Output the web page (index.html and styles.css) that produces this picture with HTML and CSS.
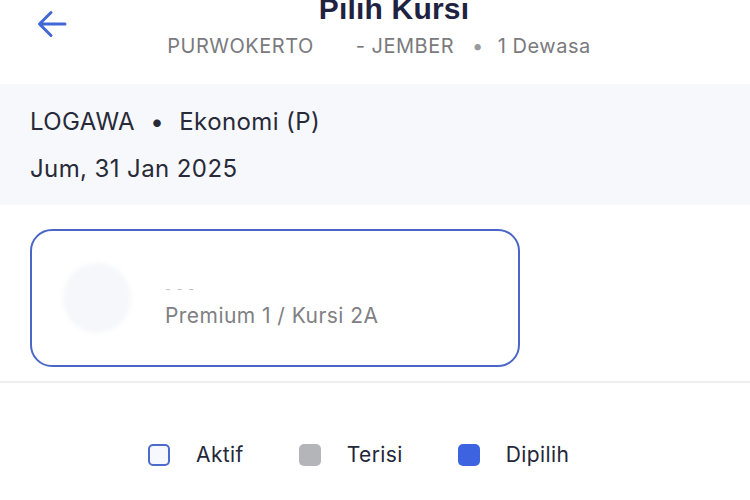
FILE: index.html
```html
<!DOCTYPE html>
<html lang="id">
<head>
<meta charset="utf-8">
<title>Pilih Kursi</title>
<link rel="stylesheet" href="styles.css">
</head>
<body>
<div class="page">
  <header class="header">
    <button class="back" aria-label="Kembali">
      <svg width="32" height="32" viewBox="0 0 32 32" fill="none" stroke="#4166d5" stroke-width="3" stroke-linecap="round" stroke-linejoin="round">
        <path d="M29 16H4M15 4.5L3.5 16L15 27.5"/>
      </svg>
    </button>
    <h1 class="title">Pilih Kursi</h1>
    <div class="route">
      <span class="origin">PURWOKERTO</span>
      <span class="dest">- JEMBER</span>
      <span class="dot">•</span>
      <span>1 Dewasa</span>
    </div>
  </header>

  <section class="trip">
    <div class="trip-line">LOGAWA <span class="sep">•</span> Ekonomi (P)</div>
    <div class="trip-line">Jum, 31 Jan 2025</div>
  </section>

  <section class="passengers">
    <div class="card">
      <div class="avatar"></div>
      <div class="card-info">
        <div class="name">- - -</div>
        <div class="seat">Premium 1 / Kursi 2A</div>
      </div>
    </div>
  </section>

  <footer class="legend">
    <div class="legend-item"><span class="box box-active"></span>Aktif</div>
    <div class="legend-item"><span class="box box-filled"></span>Terisi</div>
    <div class="legend-item"><span class="box box-selected"></span>Dipilih</div>
  </footer>
</div>
</body>
</html>
```

FILE: styles.css
```css
* { box-sizing: border-box; }
html, body { margin: 0; padding: 0; background: #ffffff; }
body {
  font-family: Inter, "Noto Sans", "Liberation Sans", sans-serif;
  color: #23263a;
  width: 750px;
  height: 500px;
  overflow: hidden;
}
.page { display: flex; flex-direction: column; }

.header {
  position: relative;
  height: 84px;
  display: flex;
  flex-direction: column;
  align-items: center;
}
.back {
  position: absolute;
  left: 36px;
  top: 8px;
  border: 0;
  background: none;
  padding: 0;
  width: 32px;
  height: 32px;
}
.title {
  margin: -8px 0 0 38px;
  font-family: "Liberation Sans", Arial, sans-serif;
  font-weight: 700;
  font-size: 30px;
  line-height: 34px;
  color: #1f2240;
  letter-spacing: 0.2px;
}
.route {
  margin-top: 8px;
  margin-left: 8px;
  display: flex;
  align-items: center;
  font-size: 20px;
  line-height: 24px;
  color: #7a7a7e;
  letter-spacing: 0.5px;
}
.origin { margin-right: 42px; }
.dot { margin: 0 14px 0 18px; color: #9a9a9e; }

.trip {
  background: #f7f8fc;
  height: 121px;
  padding: 23px 30px 0;
  display: flex;
  flex-direction: column;
  gap: 17px;
}
.trip-line {
  font-size: 24px;
  line-height: 30px;
  color: #272a38;
  letter-spacing: 0.4px;
}
.sep { margin: 0 8px; }

.passengers {
  padding: 24px 0 14px 30px;
  border-bottom: 2px solid #efeff1;
}
.card {
  width: 490px;
  height: 138px;
  border: 2px solid #4a67c8;
  border-radius: 22px;
  display: flex;
  align-items: center;
  padding-left: 31px;
}
.avatar {
  width: 68px;
  height: 70px;
  border-radius: 50%;
  background: #f6f7fb;
  filter: blur(2px);
}
.card-info {
  margin-left: 34px;
  margin-top: 14px;
  display: flex;
  flex-direction: column;
}
.name {
  font-size: 13px;
  line-height: 14px;
  color: #c4c4c8;
  letter-spacing: 1px;
  filter: blur(0.5px);
}
.seat {
  margin-top: 7px;
  font-size: 21px;
  line-height: 26px;
  color: #808084;
  letter-spacing: 0.45px;
}

.legend {
  display: flex;
  padding-top: 59px;
  padding-left: 148px;
}
.legend-item {
  display: flex;
  align-items: center;
  font-size: 21px;
  line-height: 26px;
  color: #24263a;
  letter-spacing: 0.4px;
  margin-right: 55px;
}
.legend-item:last-child { margin-right: 0; }
.box {
  width: 22px;
  height: 22px;
  border-radius: 5px;
  margin-right: 26px;
}
.box-active { border: 2px solid #4d6bcc; background: #f6f8fe; }
.box-filled { background: #b4b5b9; }
.box-selected { background: #3e63e1; }
```
